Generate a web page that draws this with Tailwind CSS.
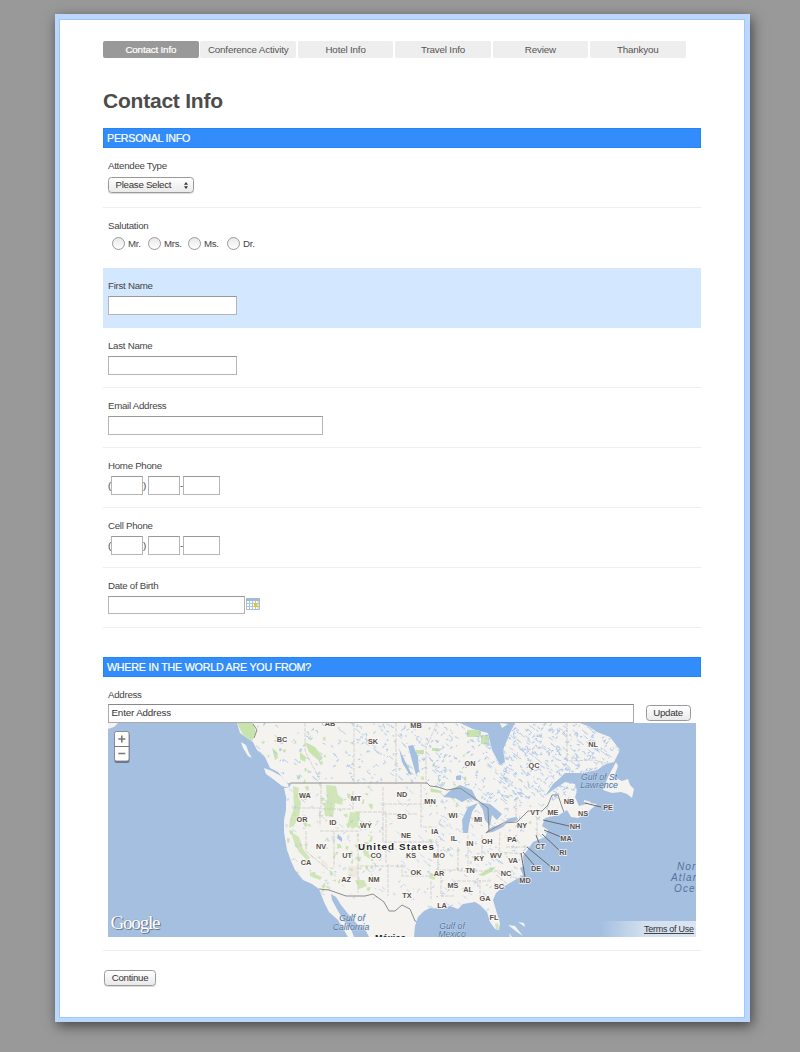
<!DOCTYPE html>
<html lang="en">
<head>
<meta charset="utf-8">
<title>Contact Info</title>
<script src="https://cdn.jsdelivr.net/npm/@tailwindcss/browser@4"></script>
</head>
<body class="h-[1052px] overflow-hidden bg-[#999] px-[55px] pt-[14px] font-['Liberation_Sans',Arial,sans-serif] text-[9.7px] leading-[12px] tracking-[-0.27px] text-[#444]">
<main class="h-[1008px] w-[694.5px] border-4 border-r-5 border-b-[3.5px] border-[#bbd7fb] bg-[#bbd7fb] pt-px shadow-[2px_4px_12px_rgba(0,0,0,0.55)]">
<div class="h-[999px] w-[686px] border border-[#9cc8ff] bg-white pt-[21px] pl-[43px]">
  <nav class="flex h-[17px] gap-[1.7px] text-center text-[9.8px] leading-[17px] tracking-[-0.17px] text-[#555]">
    <span class="w-[95.7px] rounded-xs bg-[#999] text-white [-webkit-text-stroke:0.2px_white]">Contact Info</span>
    <span class="w-[95.7px] rounded-xs bg-[#eee]">Conference Activity</span>
    <span class="w-[95.7px] rounded-xs bg-[#eee]">Hotel Info</span>
    <span class="w-[95.7px] rounded-xs bg-[#eee]">Travel Info</span>
    <span class="w-[95.7px] rounded-xs bg-[#eee]">Review</span>
    <span class="w-[95.7px] rounded-xs bg-[#eee]">Thankyou</span>
  </nav>
  <h1 class="mt-[30px] h-[40px] text-[21px] leading-[26px] font-bold tracking-[-0.22px] text-[#4c4c4c]">Contact Info</h1>
  <form class="w-[598px]">
    <h2 class="h-5 border border-[#2385fa] bg-[#328cfa] pl-[3px] text-[10.7px] leading-[19px] tracking-[-0.24px] text-white [-webkit-text-stroke:0.2px_white]">PERSONAL INFO</h2>
    <section class="h-[60px] border-b border-[#eee] pt-3 pl-[5px]">
      <div>Attendee Type</div>
      <div class="mt-[5px] flex h-4 w-[86px] items-center justify-between rounded-[3.5px] border border-[#999] bg-linear-to-b from-white via-[#f4f4f4] to-[#eaeaea] pr-[5px] pl-[6.5px] text-[#333] shadow-[0_1px_1px_rgba(0,0,0,0.15)]"><span>Please Select</span><svg class="h-[7px] w-[4px]" viewBox="0 0 4 7"><path d="M0 2.7 2 0l2 2.7zM0 4.3h4L2 7z" fill="#333"/></svg></div>
    </section>
    <section class="h-[60px] pt-3 pl-[5px]">
      <div>Salutation</div>
      <div class="mt-1 flex h-[14px] items-center pl-1">
        <i class="size-[13px] rounded-full border border-[#999] bg-linear-to-b from-[#e9e9e9] to-white"></i><span class="w-[23px] pt-px pl-[3px]">Mr.</span>
        <i class="size-[13px] rounded-full border border-[#999] bg-linear-to-b from-[#e9e9e9] to-white"></i><span class="w-[27px] pt-px pl-[3px]">Mrs.</span>
        <i class="size-[13px] rounded-full border border-[#999] bg-linear-to-b from-[#e9e9e9] to-white"></i><span class="w-[26px] pt-px pl-[3px]">Ms.</span>
        <i class="size-[13px] rounded-full border border-[#999] bg-linear-to-b from-[#e9e9e9] to-white"></i><span class="pt-px pl-[3px]">Dr.</span>
      </div>
    </section>
    <section class="h-[60px] bg-[#d3e7ff] pt-3 pl-[5px]">
      <div>First Name</div>
      <div class="mt-1 h-[19px] w-[129px] border border-[#b5b5b5] border-t-[#999] bg-white"></div>
    </section>
    <section class="h-[60px] border-b border-[#eee] pt-3 pl-[5px]">
      <div>Last Name</div>
      <div class="mt-1 h-[19px] w-[129px] border border-[#b5b5b5] border-t-[#999] bg-white"></div>
    </section>
    <section class="h-[60px] border-b border-[#eee] pt-3 pl-[5px]">
      <div>Email Address</div>
      <div class="mt-1 h-[19px] w-[215px] border border-[#b5b5b5] border-t-[#999] bg-white"></div>
    </section>
    <section class="h-[60px] border-b border-[#eee] pt-3 pl-[5px]">
      <div>Home Phone</div>
      <div class="mt-1 flex items-center">
        <span class="w-[3px]">(</span><i class="h-[19px] w-8 border border-[#b5b5b5] border-t-[#999]"></i><span class="w-[5px]">)</span><i class="h-[19px] w-8 border border-[#b5b5b5] border-t-[#999]"></i><span class="w-[3px]">-</span><i class="h-[19px] w-[37px] border border-[#b5b5b5] border-t-[#999]"></i>
      </div>
    </section>
    <section class="h-[60px] border-b border-[#eee] pt-3 pl-[5px]">
      <div>Cell Phone</div>
      <div class="mt-1 flex items-center">
        <span class="w-[3px]">(</span><i class="h-[19px] w-8 border border-[#b5b5b5] border-t-[#999]"></i><span class="w-[5px]">)</span><i class="h-[19px] w-8 border border-[#b5b5b5] border-t-[#999]"></i><span class="w-[3px]">-</span><i class="h-[19px] w-[37px] border border-[#b5b5b5] border-t-[#999]"></i>
      </div>
    </section>
    <section class="h-[60px] border-b border-[#eee] pt-3 pl-[5px]">
      <div>Date of Birth</div>
      <div class="mt-1 flex gap-px">
        <i class="h-[18px] w-[137px] border border-[#b5b5b5] border-t-[#999]"></i>
        <svg class="mt-[2px] h-3 w-[14px]" viewBox="0 0 14 12"><path fill="#fff" stroke="#a9bfcf" d="M.5.5h13v11H.5z"/><path fill="#a5bccf" d="M0 0h14v3H0z"/><path d="M1 5.500h12M1 8.500h12M3.500 3v8M6.500 3v8M9.500 3v8M12 3v8" stroke="#a5c3d9" stroke-width=".9"/><path fill="#f5c400" d="M8 5h3v4H8z"/></svg>
      </div>
    </section>
    <h2 class="mt-[29px] h-5 border border-[#2385fa] bg-[#328cfa] pl-[3px] text-[10.7px] leading-[19px] tracking-[-0.22px] text-white [-webkit-text-stroke:0.2px_white]">WHERE IN THE WORLD ARE YOU FROM?</h2>
    <section class="h-[274px] border-b border-[#eee] pt-3 pl-[5px]">
      <div>Address</div>
      <div class="mt-[3px] flex h-[19px]">
        <div class="w-[526px] border border-[#aaa] border-t-[#888] pl-[2.5px] text-[9.8px] leading-[16px] tracking-[-0.16px] text-[#333]">Enter Address</div>
        <div class="mt-[1px] ml-[11.5px] h-[15.5px] w-[45px] rounded-[3.5px] border border-[#999] bg-linear-to-b from-white to-[#e9e9e9] text-center leading-[13px] text-[#333]">Update</div>
      </div>
      <svg id="map" class="block h-[214px] w-[588px] tracking-normal" viewBox="108 723 588 214" font-family="Liberation Sans, Arial, sans-serif">
        <defs>
          <clipPath id="land"><path id="coast" d="M237 723 240 733 247 738 253 742 257 750 265 757 270 768 278 772 286 782 291 784 289 788 284 788 286 797 286 810 284 820 284 832 287 850 291 861 295 870 303 880 312 884 319 889 324 902 329 912 338 920 344 930 348 937 354 937 351 929 344 921 338 911 332 900 331 894 336 897 341 905 349 915 358 925 366 931 369 937 414 937 415 926 418 917 424 911 430 908 443 909 450 906 458 909 463 904 475 902 480 905 487 912 490 922 495 929 499 930 500 923 496 910 493 900 496 893 503 887 515 880 523 875 520 868 524 866 523 856 526 852 533 842 545 837 548 830 542 826 545 818 559 815 567 810 571 817 578 818 588 812 597 804 590 803 579 806 575 797 577 791 575 784 565 782 553 790 545 796 553 784 560 778 565 773 583 773 597 770 606 764 614 762 620 750 610 737 597 732 590 727 580 723 515 723 510 733 503 750 505 762 500 765 492 750 488 733 473 729 460 723Z"/></clipPath>
          <linearGradient id="fade"><stop stop-color="#fff" stop-opacity="0"/><stop offset=".45" stop-color="#fff" stop-opacity=".5"/><stop offset="1" stop-color="#fff" stop-opacity=".6"/></linearGradient>
        </defs>
        <path fill="#a4bfdf" d="M108 723h588v214H108z"/>
        <use href="#coast" fill="#f4f3f0"/>
        <g fill="#f4f3f0"><path d="M108 723h10l-4 4-6 2zM241 742l5 3 3 8 3 5-4-2-5-8zM264 768l8 3 9 5 7 8 1 4-7-2-9-7-7-5zM603 790l5-13 8-15 2 4-4 11 8 4 6-2 2 6 4 4-2 9-5-4-6-2-9 1zM584 800l7 2-1 2-6-2zM500 723l8 1-6 4zM508 925l7 1 4 5 4 5-6-4zM509 933l3 4h-2zM518 922l6 1 1 4z"/></g>
        <g clip-path="url(#land)">
          <g fill="#c9e3ae"><path d="M237 723h16l3 9-4 9-8-4zM272 748l5 4 1 6-3 2zM305 742l10 5 8 11-5 2-9-8zM300 752l6 5-1 5-5-3zM467 730h14v5h8v9h-8v-7h-14zM416 750h8v4h-8zM432 748h7v3h-7zM430 788l12 3-1 2-10-1zM478 875l12-7 6-1-5 5-8 4z"/><path d="M293 786l6 2-1 9 3 5-2 14-5 10-5 2 1-9 4-11zM291 832l8 5 4 12 7 9-2 3-9-9-5-10zM326 785l10 1 2 9 5 4-1 6-7-2-2 14-8-1-1-8 3-9zM350 812l9 1-1 13-6 3-4-6zM361 843l6 2 3 14-6-4zM310 872l12 5-2 3-10-4zM355 880h9l3 6-8 3zM495 924l3-1 1 6h-3zM430 873l7 2-3 5-5-2z" opacity=".85"/></g>
          <path fill="#efe9e1" d="M348 866h10v11h-10zM321 859l6 4 1 5-6-2z"/>
          <g id="greens" fill="#cae3b0"></g>
          <g id="waters" fill="none" stroke="#a9c5e8" stroke-linecap="round" stroke-linejoin="round"></g>
          <g fill="#a4bfdf"><path d="M408 746l5-1 5 12 1 14-3 4-3-11zM399 748l3 7 6 12 4 8-3-1-7-12zM443 797l9-8 8-4 12 5 6 12-8-4-8 4-7-4zM463 833l-1-13 6-13 10-4-6 9-3 13-1 8zM478 802l12 2 12 10-5 6-5-5-2 11-5-6-2-10zM485 833l7-6 15-4-4 4-10 5zM504 822l6-4 7-1 1 3-9 3zM338 834l4 4v4l-5-4zM456 776l5-1v5h-5z"/></g>
          <g fill="none" stroke="#c9c6c2" stroke-width=".7" stroke-dasharray="4 1"><path d="M305 723v28l15 29M354 723v61M396 723v61M437 723l-11 25v36M292 808h28v18M321 785v24h32v-18M320 831h38v35h46M306 831v20l25 21M334 831v36M383 787v55h37M383 814h35M383 804h45M358 812h28v52M358 866v27M388 864v32M402 864v12h29M421 784v43h13M420 842h18v28h21M441 870v26h14M431 881v18M458 847v24M468 835v31M482 835v26M459 871h54M480 880v20M457 881h35M496 875l15 12M506 847h24M500 832l-1 20 23 2M537 812v26M516 798v22M567 723v38l27-1 20 5"/></g>
          <path fill="none" stroke="#8c8c8c" d="M253 724l4 6-3 8M284 787l7-4h136l3 3 8 1 9 3 13-2 20 14 8 6 1 22-3 3 17-10 14-1 11-11h14l6-6 4-10h6l4 12 2 5M319 889l10 1 17 6h19l8-2 11 8 5 9h6l7-6 8 4 5 12 6 3"/>
        </g>
        <path d="M585 803l16 4M543 820l26 6M544 830l17 7M536 835l3 8M542 834l18 17M527 847l24 20M523 852l11 13M521 853l4 24" stroke="#625e5b" stroke-width=".9"/>
        <g id="codes" font-size="7.3" font-weight="bold" fill="#5b5049" stroke="#fff" stroke-width="1.6" stroke-opacity=".75" paint-order="stroke" text-anchor="middle"></g>
        <text x="358" y="850" font-size="9.800" font-weight="bold" fill="#222" stroke="#fff" stroke-width="1.6" paint-order="stroke" textLength="76">United States</text>
        <text x="375" y="940.5" font-size="9" font-weight="bold" fill="#222" textLength="31">México</text>
        <g font-size="8.700" font-style="italic" fill="#52749e" text-anchor="middle" stroke="#d9e5f2" stroke-width=".8" stroke-opacity=".6" paint-order="stroke"><text x="352" y="921">Gulf of</text><text x="351" y="929.5">California</text><text x="452" y="929">Gulf of</text><text x="452" y="937">Mexico</text><text x="599" y="780">Gulf of St</text><text x="599" y="788">Lawrence</text></g>
        <g font-size="10" font-style="italic" fill="#52749e" letter-spacing="1.1"><text x="677" y="869.500">North</text><text x="671" y="880.500">Atlantic</text><text x="674" y="891.500">Ocean</text></g>
        <path d="M600 921h96v16h-96z" fill="url(#fade)"/>
        <text x="644" y="932" font-size="9" fill="#333" textLength="50" text-decoration="underline">Terms of Use</text>
        <text x="111.500" y="930" font-family="Liberation Serif, serif" font-size="19" fill="#65758a" textLength="50">Google</text>
        <text x="110.500" y="929" font-family="Liberation Serif, serif" font-size="19" fill="#fff" stroke="#8593a4" stroke-width=".5" paint-order="stroke" textLength="50">Google</text>
        <rect x="114.500" y="733" width="15" height="30" rx="2" fill="#46566b" opacity=".65"/>
        <rect x="114.500" y="731.500" width="14.500" height="29.500" rx="2" fill="#fff" stroke="#777" stroke-width=".8"/>
        <path d="M114.500 746.500h14.500" stroke="#777"/>
        <path d="M118.300 739h7M121.800 735.500v7M118.300 753.500h7" fill="none" stroke="#777" stroke-width="1.600"/>
      </svg>
    </section>
    <div class="mt-[19px] ml-px h-[15.5px] w-[52px] rounded-[3.5px] border border-[#999] bg-linear-to-b from-white to-[#e9e9e9] text-center leading-[13px] text-[#333] shadow-[0_1px_1px_rgba(0,0,0,0.15)]">Continue</div>
  </form>
</div>
</main>
<script>
const ns = 'http://www.w3.org/2000/svg';
// Province and state codes with their map positions.
const codes = 'BC 282 741.5,AB 330 725.5,SK 373 744,MB 416 728,ON 470 766,QC 534 768,NL 593 746.5,WA 305 798,MT 356 801,ND 402 797,MN 430 804,WI 453 818,OR 302 822,ID 333 825,WY 366 828,SD 402 819,NE 406 837.5,IA 435 834,IL 454 841,MI 478 822,NY 522 828,VT 535 815,ME 553 815,NB 569 804,NS 583 816,PE 608 810,NH 575 829,MA 566 841,RI 563 855,CT 540 849,NJ 555 871,DE 536 871,MD 525 883,PA 512 842,OH 487 844,IN 470 846,WV 496 857.5,VA 513 863,KY 479 861,NC 506 876,TN 470 873,SC 499 889,GA 485 901,AL 468 892,FL 494 920,MS 453 888,LA 442 908,AR 439 876,MO 439 858,KS 411 857.5,OK 416 875,TX 407 898,NM 374 882,AZ 346 882,CO 376 857.5,UT 347 857.5,NV 321 849,CA 306 865';
for (const c of codes.split(',')) {
  const [name, x, y] = c.split(' ');
  const t = document.createElementNS(ns, 'text');
  t.setAttribute('x', x); t.setAttribute('y', y); t.textContent = name;
  document.getElementById('codes').append(t);
}
// Seeded scatter of lakes, streams and small woods over the land.
let seed = 17;
const rnd = () => (seed = (seed * 16807) % 2147483647) / 2147483647;
function scatter(id, n, x0, x1, y0, y1, len, w) {
  let d = '';
  for (let i = 0; i < n; i++) {
    const x = x0 + rnd() * (x1 - x0), y = y0 + rnd() * (y1 - y0);
    const a = rnd() * len - len / 2, b = rnd() * len - len / 2;
    d += id === 'greens'
      ? `M${x} ${y}l${1 + rnd() * len} ${a / 2} ${-rnd()} ${1 + rnd() * len}-2 ${-rnd()}z`
      : `M${x} ${y}l${a} ${b} ${b * .8} ${a * .5}`;
  }
  const p = document.createElementNS(ns, 'path');
  p.setAttribute('d', d); p.setAttribute('stroke-width', w);
  document.getElementById(id).append(p);
}
scatter('greens', 28, 255, 345, 735, 785, 3, 0);
scatter('greens', 90, 286, 372, 786, 890, 4, 0);
scatter('greens', 26, 430, 545, 790, 890, 2, 0);
scatter('greens', 12, 390, 470, 740, 810, 3, 0);
scatter('waters', 90, 250, 375, 723, 782, 5, .8);
scatter('waters', 130, 360, 440, 723, 782, 4, .8);
scatter('waters', 180, 435, 510, 723, 800, 5, .8);
scatter('waters', 480, 500, 622, 723, 800, 5.5, .8);
scatter('waters', 140, 285, 430, 786, 900, 5, .5);
scatter('waters', 260, 425, 550, 800, 912, 5, .6);
</script>
</body>
</html>
